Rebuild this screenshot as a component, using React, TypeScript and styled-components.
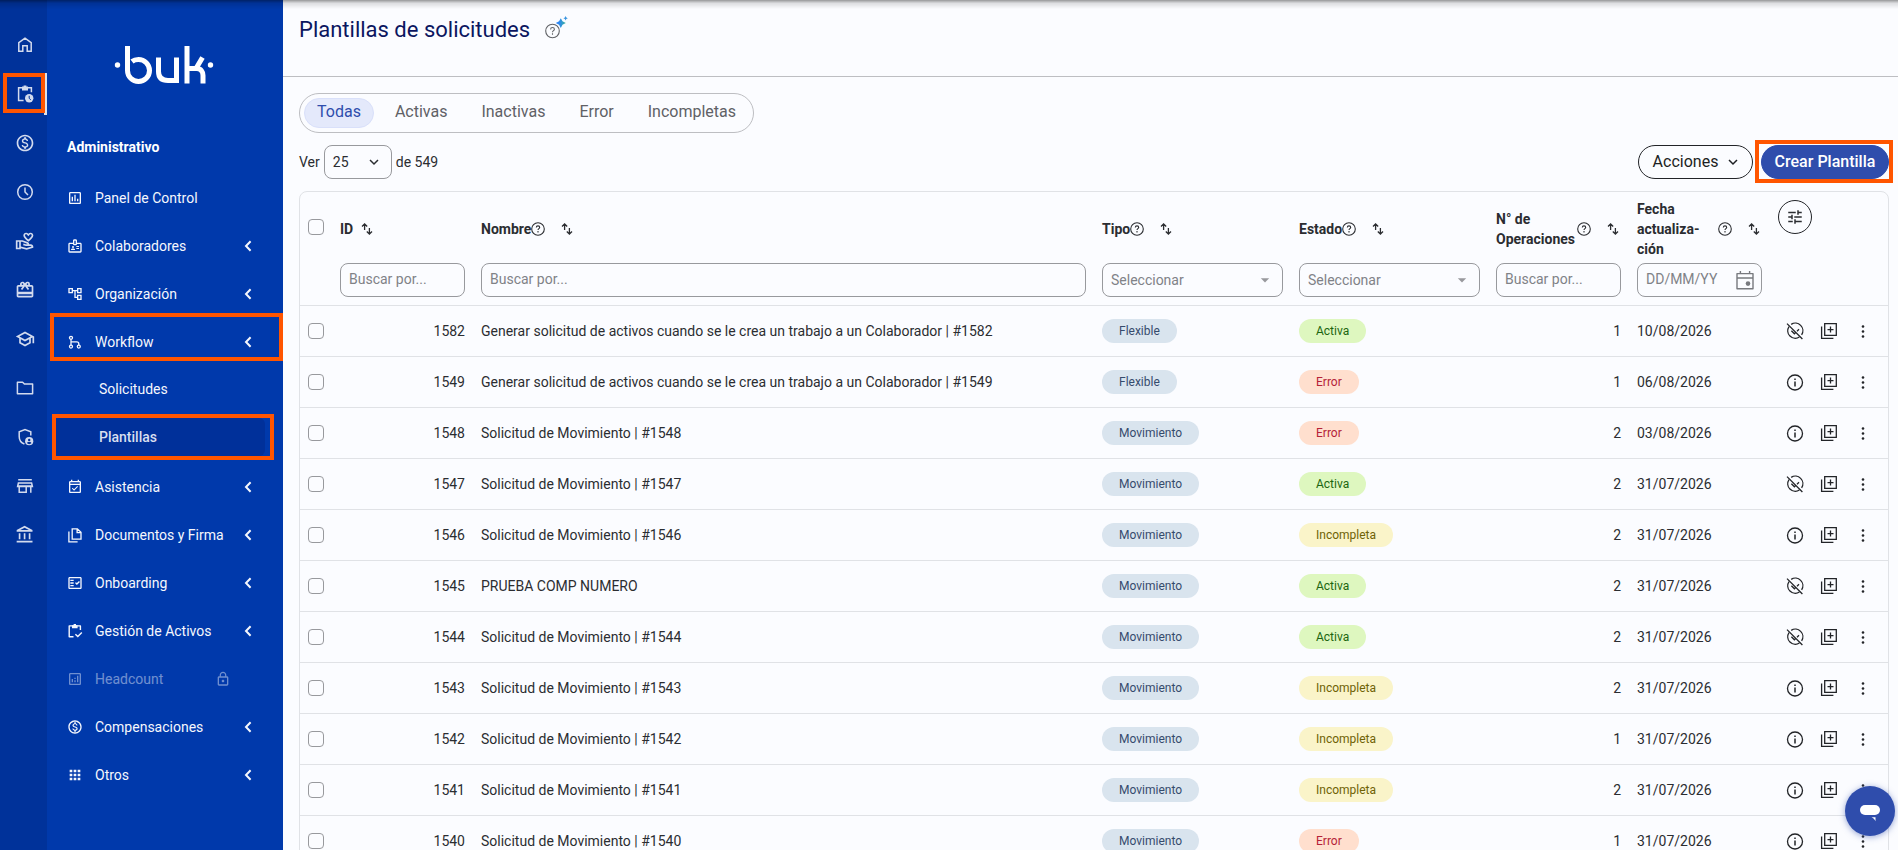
import React from "react";
import styled, { createGlobalStyle, css } from "styled-components";
import {
  MdApps,
  MdArrowDropDown,
  MdOutlineAccountBalance,
  MdOutlineAccountTree,
  MdOutlineAnalytics,
  MdOutlineBadge,
  MdOutlineCardGiftcard,
  MdOutlineEventAvailable,
  MdOutlineFactCheck,
  MdOutlineInsertChart,
  MdOutlineMonetizationOn,
  MdOutlineSchool,
  MdOutlineVolunteerActivism,
  MdLockOutline,
  MdTune,
} from "react-icons/md";

const color = {
  rail: "#00329a",
  sidebar: "#0039ab",
  sidebarActive: "#00309a",
  page: "#fbfcff",
  ink: "#2b2d31",
  muted: "#5f6166",
  title: "#0b1660",
  primary: "#2f4dac",
  highlight: "#ff5500",
  line: "#e0e2e6",
  control: "#98999d",
};

const GlobalStyle = createGlobalStyle`
  *, *::before, *::after { box-sizing: border-box; }
  body {
    margin: 0;
    background: ${color.page};
    color: ${color.ink};
    font: 14px/20px Roboto, "Liberation Sans", sans-serif;
  }
  button, input, select { font: inherit; color: inherit; margin: 0; }
  button { background: none; border: 0; padding: 0; cursor: pointer; }
  ul { list-style: none; margin: 0; padding: 0; }
  svg { display: block; flex: none; }
`;

/* ---------- icons ---------- */

const StrokeSvg = styled.svg<{ $size: number; $weight?: number }>`
  width: ${(p) => p.$size}px;
  height: ${(p) => p.$size}px;
  fill: none;
  stroke: currentColor;
  stroke-width: ${(p) => p.$weight ?? 1.5};
`;

type IconProps = { size?: number };

const HomeIcon = () => (
  <StrokeSvg $size={20} viewBox="0 0 20 20">
    <path d="M3.8 16.2V7.7L10 3.1l6.2 4.6v8.5h-4v-5.4H7.8v5.4z" />
  </StrokeSvg>
);
const PendingIcon = () => (
  <StrokeSvg $size={20} viewBox="0 0 20 20">
    <path d="M8.6 16.6H3.6V3.8h12.8v4.4" />
    <path d="M7 2.6h6v4H7zM8.6 1.5h2.8v2H8.6z" fill="currentColor" stroke="none" />
    <circle cx="14.2" cy="14.2" r="4.2" fill="currentColor" stroke="none" />
    <path d="M14.2 11.8v2.6l1.6 1.4" stroke={color.sidebarActive} strokeWidth="1" />
  </StrokeSvg>
);
const ClockIcon = () => (
  <StrokeSvg $size={20} viewBox="0 0 20 20">
    <circle cx="10" cy="10" r="7.3" />
    <path d="M10 5.6V10l3 3" />
  </StrokeSvg>
);
const FolderIcon = () => (
  <StrokeSvg $size={20} viewBox="0 0 20 20">
    <path d="M2.4 4.2h5.2l1.8 1.9h8.2v9.7H2.4z" strokeLinejoin="round" />
  </StrokeSvg>
);
const ShieldIcon = () => (
  <StrokeSvg $size={20} viewBox="0 0 20 20">
    <path d="M15.8 8.6V4.7L10 2.6 4.2 4.7v4.7c0 3.6 2.2 6.5 5.2 7.6" />
    <circle cx="14.2" cy="14.2" r="4.1" fill="currentColor" stroke="none" />
    <path d="M14.2 11.7a1.2 1.2 0 1 0 0 2.4 1.2 1.2 0 0 0 0-2.4zM11.9 16c.6-.8 1.4-1.2 2.3-1.2s1.7.4 2.3 1.2a2.9 2.9 0 0 1-4.6 0z" fill={color.rail} stroke="none" />
  </StrokeSvg>
);
const StoreIcon = () => (
  <StrokeSvg $size={20} viewBox="0 0 20 20">
    <path d="M3.2 3.8h13.6M3.2 10h13.6M3.4 7h13.2l.8 3.6H2.6zM4.2 10v6.2h7V10M15.8 10v6.8" />
  </StrokeSvg>
);
const BranchIcon = () => (
  <StrokeSvg $size={16} $weight={1.3} viewBox="0 0 16 16">
    <circle cx="4" cy="3.8" r="1.5" />
    <circle cx="4" cy="12.6" r="1.5" />
    <circle cx="11.8" cy="12.6" r="1.5" />
    <path d="M4 5.4v5.6M4 7.8h5.8a2 2 0 0 1 2 2v1.2" />
  </StrokeSvg>
);
const FilesIcon = () => (
  <StrokeSvg $size={16} $weight={1.3} viewBox="0 0 16 16">
    <path d="M5.2 1.9h5.2l3.6 3.4v6.9H5.2zM10.1 2v3.6h3.7" />
    <path d="M1.9 4.4v10.4h8.7" />
  </StrokeSvg>
);
const AssignmentIcon = () => (
  <StrokeSvg $size={16} $weight={1.4} viewBox="0 0 16 16">
    <path d="M6.5 13.7H2.2V2.9h11.2V7" strokeLinejoin="round" />
    <path d="M5 2.2h5.6v3H5zM6.6 1h2.4v2H6.6z" fill="currentColor" stroke="none" />
    <path d="M8.4 11.2l2.4 2.4 4-4.2" />
  </StrokeSvg>
);
const ChevronLeft = () => (
  <StrokeSvg $size={12} $weight={2} viewBox="0 0 12 12">
    <path d="M8.6 1.2L4 6l4.600 4.8" />
  </StrokeSvg>
);
const ChevronDown = ({ size = 10 }: IconProps) => (
  <StrokeSvg $size={size} viewBox="0 0 10 10">
    <path d="M1 3l4 4 4-4" />
  </StrokeSvg>
);
const HelpIcon = ({ size = 14 }: IconProps) => (
  <StrokeSvg $size={size} $weight={1.1} viewBox="0 0 14 14">
    <circle cx="7" cy="7" r="6.3" />
    <path d="M5.300 5.6c0-1 .7-1.7 1.7-1.7s1.7.6 1.7 1.5c0 1.2-1.7 1.3-1.7 2.7M7 9.1v1.3" />
  </StrokeSvg>
);
const SortIcon = () => (
  <StrokeSvg $size={12} $weight={1.3} viewBox="0 0 12 12">
    <path d="M3.6 7V1M1 3.5L3.6 1l2.6 2.5M8.4 5v6M5.8 8.5L8.400 11 11 8.5" />
  </StrokeSvg>
);
const CalendarIcon = () => (
  <StrokeSvg $size={20} $weight={1.4} viewBox="0 0 20 20">
    <path d="M2 3.6h16v15.2H2zM2 8h16M5.400 1v2.6M14.6 1v2.6" strokeLinejoin="round" />
    <circle cx="13" cy="13.6" r="2.3" fill="currentColor" stroke="none" />
  </StrokeSvg>
);
const DeactivateIcon = () => (
  <StrokeSvg $size={20} $weight={1.3} viewBox="0 0 20 20">
    <path d="M6.2 3.4A7.5 7.5 0 0 1 16.6 13.8M14.4 16A7.5 7.5 0 0 1 4 5.6" />
    <path d="M2 2.6L17.4 18M6.4 9.8l3 3 1.2-1.2M12 10.2l2-2" />
  </StrokeSvg>
);
const InfoIcon = () => (
  <StrokeSvg $size={20} $weight={1.3} viewBox="0 0 20 20">
    <circle cx="10" cy="10.5" r="7.5" />
    <path d="M10 9.4v5M10 6.6v1.5" strokeWidth="1.5" />
  </StrokeSvg>
);
const DuplicateIcon = () => (
  <StrokeSvg $size={20} $weight={1.3} viewBox="0 0 20 20">
    <path d="M5.700 2.7h11.6v11.6H5.7zM11.5 5.6v6M8.5 8.6h6" />
    <path d="M2.6 5.6v11.8h11.8" />
  </StrokeSvg>
);
const MoreIcon = () => (
  <StrokeSvg $size={20} viewBox="0 0 20 20">
    <g fill="currentColor" stroke="none">
      <circle cx="10" cy="5.5" r="1.300" />
      <circle cx="10" cy="10.5" r="1.300" />
      <circle cx="10" cy="15.5" r="1.300" />
    </g>
  </StrokeSvg>
);

/* ---------- shell ---------- */

const Shell = styled.div`
  display: grid;
  grid-template-columns: 47px 236px minmax(0, 1fr);
  height: 100vh;
  overflow: hidden;
`;

const TopShade = styled.div`
  position: fixed;
  inset: 0 0 auto;
  height: 9px;
  pointer-events: none;
  background: linear-gradient(rgba(0, 0, 0, 0.4), rgba(0, 0, 0, 0.12) 35%, transparent);
`;

const outlined = css`
  content: "";
  position: absolute;
  border: 4px solid ${color.highlight};
  pointer-events: none;
`;

const Rail = styled.nav`
  background: ${color.rail};
  color: #d3dbee;
  padding-top: 24px;
`;

const RailList = styled.ul`
  display: grid;
  gap: 7px;
`;

const RailLink = styled.a<{ $active?: boolean }>`
  position: relative;
  display: flex;
  align-items: center;
  height: 42px;
  padding-left: 15px;
  color: inherit;
  ${(p) =>
    p.$active &&
    css`
      background: ${color.sidebarActive};
      border-right: 3px solid #dfe1e6;
      &::after {
        ${outlined}
        inset: 0 -1px 2px 3px;
      }
    `}
`;

const Sidebar = styled.aside`
  background: ${color.sidebar};
  color: #f5f7fd;
`;

const Logo = styled.svg`
  width: 100px;
  height: 40px;
  margin: 45px 0 0 67px;
  fill: none;
  stroke: #fff;
  stroke-width: 5;
`;

const SideHeading = styled.h2`
  margin: 52px 0 17px 20px;
  font-size: 14px;
  line-height: 20px;
  font-weight: 700;
  color: #fff;
`;

const MenuLink = styled.a<{ $disabled?: boolean; $marked?: boolean }>`
  position: relative;
  display: flex;
  align-items: center;
  gap: 12px;
  height: 48px;
  padding: 0 29px 0 20px;
  color: inherit;
  text-decoration: none;
  opacity: ${(p) => (p.$disabled ? 0.45 : 1)};
  & > span { flex: 1; }
  & > svg:first-child { width: 16px; height: 16px; }
  ${(p) =>
    p.$marked &&
    css`
      &::after {
        ${outlined}
        inset: -5px 0 5px 3px;
      }
    `}
`;

const LockSlot = styled.i`
  padding-right: 23px;
`;

const SubMenu = styled.ul`
  display: grid;
  gap: 10px;
  padding: 4px 18px 7px 5px;
`;

const SubLink = styled.a<{ $active?: boolean }>`
  position: relative;
  display: flex;
  align-items: center;
  height: 38px;
  padding-left: 47px;
  border-radius: 6px;
  color: inherit;
  text-decoration: none;
  ${(p) =>
    p.$active &&
    css`
      background: ${color.sidebarActive};
      color: #d8dfef;
      font-weight: 500;
      &::after {
        ${outlined}
        inset: -4px -9px -4px 0;
      }
    `}
`;

/* ---------- page ---------- */

const Main = styled.main`
  min-width: 0;
`;

const PageHeader = styled.header`
  display: flex;
  gap: 14px;
  height: 77px;
  padding: 14px 16px;
  border-bottom: 1px solid #bdbec2;
`;

const PageTitle = styled.h1`
  margin: 0;
  font-size: 22px;
  line-height: 32px;
  font-weight: 400;
  color: ${color.title};
`;

const AssistButton = styled.button`
  height: 28px;
  color: #606266;
`;

const Content = styled.div`
  padding: 16px 9px 0 16px;
`;

const Tabs = styled.div`
  display: inline-flex;
  gap: 8px;
  padding: 4px;
  border: 1px solid #bdbec2;
  border-radius: 20px;
`;

const Tab = styled.button<{ $active?: boolean }>`
  height: 30px;
  padding: 0 12px 2px;
  border: 1px solid ${(p) => (p.$active ? "#d9e0fa" : "transparent")};
  border-radius: 15px;
  background: ${(p) => (p.$active ? "#e4e9fb" : "transparent")};
  color: ${(p) => (p.$active ? color.primary : color.muted)};
  font-size: 16px;
  line-height: 24px;
`;

const Toolbar = styled.div`
  display: flex;
  align-items: center;
  gap: 8px;
  height: 34px;
  margin: 12px 0;
`;

const PageSize = styled.label`
  display: flex;
  align-items: center;
  gap: 4px;
  margin-right: auto;
`;

const SelectWrap = styled.span<{ $muted?: boolean }>`
  position: relative;
  display: flex;
  align-items: center;
  color: ${(p) => (p.$muted ? "#808287" : color.ink)};
  & > svg {
    position: absolute;
    right: ${(p) => (p.$muted ? 8 : 13)}px;
    pointer-events: none;
    color: ${(p) => (p.$muted ? color.control : color.ink)};
  }
`;

const controlBox = css`
  height: 34px;
  border: 1px solid ${color.control};
  border-radius: 8px;
  background: transparent;
  font-weight: 400;
  outline: none;
`;

const Select = styled.select<{ $compact?: boolean }>`
  ${controlBox}
  width: ${(p) => (p.$compact ? "68px" : "100%")};
  padding: 0 8px;
  appearance: none;
`;

const TextInput = styled.input`
  ${controlBox}
  display: block;
  width: 100%;
  padding: 0 8px 2px;
  &::placeholder { color: #808287; opacity: 1; }
`;

const DateField = styled.span`
  position: relative;
  display: flex;
  align-items: center;
  & > button {
    position: absolute;
    right: 7px;
    color: #77797e;
  }
`;

const PillButton = styled.button<{ $primary?: boolean }>`
  position: relative;
  display: flex;
  align-items: center;
  justify-content: center;
  gap: 10px;
  height: 34px;
  min-width: ${(p) => (p.$primary ? 128 : 115)}px;
  border: 1px solid ${(p) => (p.$primary ? color.primary : "#222428")};
  border-radius: 17px;
  background: ${(p) => (p.$primary ? color.primary : "transparent")};
  color: ${(p) => (p.$primary ? "#fff" : "#1d1f23")};
  font-size: 16px;
  font-weight: ${(p) => (p.$primary ? 500 : 400)};
  ${(p) =>
    p.$primary &&
    css`
      &::after {
        ${outlined}
        inset: -6px -5px -5px -7px;
      }
    `}
`;

/* ---------- table ---------- */

const TableFrame = styled.div`
  border: 1px solid ${color.line};
  border-radius: 8px 8px 0 0;
  overflow: hidden;
`;

const Table = styled.table`
  width: 100%;
  table-layout: fixed;
  border-collapse: separate;
  border-spacing: 0;
`;

const Col = styled.col<{ $width?: number }>`
  width: ${(p) => (p.$width ? `${p.$width}px` : "auto")};
`;

const HeadCell = styled.th`
  height: 114px;
  padding: 8px;
  border-bottom: 1px solid ${color.line};
  vertical-align: top;
  text-align: left;
  font-weight: 700;
`;

const HeadLabel = styled.div<{ $spread?: boolean }>`
  display: flex;
  align-items: center;
  height: 58px;
  margin-bottom: 5px;
  padding-right: ${(p) => (p.$spread ? 2 : 0)}px;
  & > span {
    flex: ${(p) => (p.$spread ? "1 1 0" : "none")};
    min-width: 0;
  }
`;

const SortButton = styled.button<{ $gap?: number }>`
  margin-left: ${(p) => p.$gap ?? 16}px;
`;

const Cell = styled.td<{ $align?: "right" }>`
  height: 51px;
  padding: 0 8px;
  border-bottom: 1px solid ${color.line};
  text-align: ${(p) => p.$align ?? "left"};
  vertical-align: middle;
`;

const Check = styled.input<{ $head?: boolean }>`
  appearance: none;
  display: block;
  width: 16px;
  height: 16px;
  margin: ${(p) => (p.$head ? "19px 0 0" : "0")};
  border: 1px solid ${color.control};
  border-radius: 4px;
`;

type Tone = "blue" | "green" | "red" | "yellow";
const tones: Record<Tone, [string, string]> = {
  blue: ["#d9e4ee", "#364b6d"],
  green: ["#def7bf", "#1c6610"],
  red: ["#ffdfce", "#b52238"],
  yellow: ["#faf4c9", "#6f6206"],
};

const Badge = styled.span<{ $tone: Tone }>`
  display: inline-block;
  height: 24px;
  padding: 0 17px;
  border-radius: 12px;
  background: ${(p) => tones[p.$tone][0]};
  color: ${(p) => tones[p.$tone][1]};
  font-size: 12px;
  line-height: 24px;
  vertical-align: middle;
`;

const RoundButton = styled.button`
  display: grid;
  place-items: center;
  width: 34px;
  height: 34px;
  border: 1px solid #222428;
  border-radius: 50%;
`;

const RowActions = styled.div`
  display: flex;
  align-items: center;
  gap: 14px;
  padding-left: 7px;
  color: #222428;
`;

const ChatButton = styled.button`
  position: fixed;
  right: 3px;
  bottom: 14px;
  display: grid;
  place-items: center;
  width: 50px;
  height: 50px;
  border-radius: 50%;
  background: ${color.primary};
  box-shadow: 0 1px 6px rgba(47, 77, 172, 0.5);
`;

/* ---------- data ---------- */

const railItems: [string, React.ReactNode][] = [
  ["Inicio", <HomeIcon />],
  ["Administrativo", <PendingIcon />],
  ["Remuneraciones", <MdOutlineMonetizationOn size={20} />],
  ["Tiempo", <ClockIcon />],
  ["Beneficios", <MdOutlineVolunteerActivism size={20} />],
  ["Regalos", <MdOutlineCardGiftcard size={20} />],
  ["Capacitaciones", <MdOutlineSchool size={20} />],
  ["Carpetas", <FolderIcon />],
  ["Seguridad", <ShieldIcon />],
  ["Marketplace", <StoreIcon />],
  ["Finanzas", <MdOutlineAccountBalance size={20} />],
];

type MenuItem = { label: string; icon: React.ReactNode; leaf?: boolean; locked?: boolean; marked?: boolean };

const menuTop: MenuItem[] = [
  { label: "Panel de Control", icon: <MdOutlineInsertChart />, leaf: true },
  { label: "Colaboradores", icon: <MdOutlineBadge /> },
  { label: "Organización", icon: <MdOutlineAccountTree /> },
  { label: "Workflow", icon: <BranchIcon />, marked: true },
];

const menuBottom: MenuItem[] = [
  { label: "Asistencia", icon: <MdOutlineEventAvailable /> },
  { label: "Documentos y Firma", icon: <FilesIcon /> },
  { label: "Onboarding", icon: <MdOutlineFactCheck /> },
  { label: "Gestión de Activos", icon: <AssignmentIcon /> },
  { label: "Headcount", icon: <MdOutlineAnalytics />, locked: true },
  { label: "Compensaciones", icon: <MdOutlineMonetizationOn /> },
  { label: "Otros", icon: <MdApps /> },
];

const statusTone: Record<string, Tone> = { Activa: "green", Error: "red", Incompleta: "yellow" };

type Row = [id: number, name: string, type: string, status: string, ops: number, date: string];
const longName = "Generar solicitud de activos cuando se le crea un trabajo a un Colaborador";
const rows: Row[] = [
  [1582, `${longName} | #1582`, "Flexible", "Activa", 1, "10/08/2026"],
  [1549, `${longName} | #1549`, "Flexible", "Error", 1, "06/08/2026"],
  [1548, "Solicitud de Movimiento | #1548", "Movimiento", "Error", 2, "03/08/2026"],
  [1547, "Solicitud de Movimiento | #1547", "Movimiento", "Activa", 2, "31/07/2026"],
  [1546, "Solicitud de Movimiento | #1546", "Movimiento", "Incompleta", 2, "31/07/2026"],
  [1545, "PRUEBA COMP NUMERO", "Movimiento", "Activa", 2, "31/07/2026"],
  [1544, "Solicitud de Movimiento | #1544", "Movimiento", "Activa", 2, "31/07/2026"],
  [1543, "Solicitud de Movimiento | #1543", "Movimiento", "Incompleta", 2, "31/07/2026"],
  [1542, "Solicitud de Movimiento | #1542", "Movimiento", "Incompleta", 1, "31/07/2026"],
  [1541, "Solicitud de Movimiento | #1541", "Movimiento", "Incompleta", 2, "31/07/2026"],
  [1540, "Solicitud de Movimiento | #1540", "Movimiento", "Error", 1, "31/07/2026"],
];

/* ---------- parts ---------- */

const MenuList = ({ items }: { items: MenuItem[] }) => (
  <>
    {items.map((item) => (
      <li key={item.label}>
        <MenuLink href="#" $disabled={item.locked} $marked={item.marked}>
          {item.icon}
          <span>{item.label}</span>
          {item.locked && <LockSlot><MdLockOutline size={16} /></LockSlot>}
          {!item.leaf && !item.locked && <ChevronLeft />}
        </MenuLink>
      </li>
    ))}
  </>
);

type HeadProps = {
  label: React.ReactNode;
  name: string;
  help?: boolean;
  spread?: boolean;
  sortGap?: number;
  children: React.ReactNode;
};

const ColumnHead = ({ label, name, help, spread, sortGap, children }: HeadProps) => (
  <HeadCell scope="col">
    <HeadLabel $spread={spread}>
      <span>{label}</span>
      {help && <HelpIcon />}
      <SortButton $gap={sortGap} aria-label={`Ordenar por ${name}`}>
        <SortIcon />
      </SortButton>
    </HeadLabel>
    {children}
  </HeadCell>
);

const FilterSelect = ({ name }: { name: string }) => (
  <SelectWrap $muted>
    <Select aria-label={`Filtrar ${name}`}>
      <option>Seleccionar</option>
    </Select>
    <MdArrowDropDown size={20} />
  </SelectWrap>
);

export default function App() {
  return (
    <>
      <GlobalStyle />
      <Shell>
        <Rail aria-label="Módulos">
          <RailList>
            {railItems.map(([label, icon], i) => (
              <li key={label}>
                <RailLink href="#" aria-label={label} $active={i === 1}>
                  {icon}
                </RailLink>
              </li>
            ))}
          </RailList>
        </Rail>

        <Sidebar>
          <Logo viewBox="0 0 100 40" role="img" aria-label="buk">
            <circle cx="3.5" cy="20" r="2.7" fill="#fff" stroke="none" />
            <circle cx="96.5" cy="20" r="2.7" fill="#fff" stroke="none" />
            <path d="M13.5 1v24.5a11 11 0 1 0 11-11c-3 0-5 .8-6.5 2" />
            <path d="M44.5 12.5v14c0 6 3.5 9 9.5 9h8.500v-23" />
            <path d="M73 1v37.5M73 23.5h9.5c4.500 0 6.5 3 6.5 7v8M82 23.5l6.5-11" />
          </Logo>
          <SideHeading>Administrativo</SideHeading>
          <nav aria-label="Administrativo">
            <ul>
              <MenuList items={menuTop} />
              <li>
                <SubMenu>
                  <li><SubLink href="#">Solicitudes</SubLink></li>
                  <li><SubLink href="#" $active aria-current="page">Plantillas</SubLink></li>
                </SubMenu>
              </li>
              <MenuList items={menuBottom} />
            </ul>
          </nav>
        </Sidebar>

        <Main>
          <PageHeader>
            <PageTitle>Plantillas de solicitudes</PageTitle>
            <AssistButton aria-label="Ayuda">
              <StrokeSvg $size={24} $weight={1.1} viewBox="0 0 24 24">
                <defs>
                  <linearGradient id="spark" x1="0" x2="1">
                    <stop offset="0.3" stopColor="#2a84f5" />
                    <stop offset="1" stopColor="#3db39b" />
                  </linearGradient>
                </defs>
                <circle cx="8.5" cy="15" r="6.8" />
                <path d="M6.6 13.4c0-1.1.8-1.9 1.9-1.9s1.9.7 1.9 1.7c0 1.4-1.9 1.500-1.9 3M8.5 17.300v1.4" />
                <path d="M16.8 2.2l1.7 3.1 3.3 1.7-3.3 1.7-1.700 3.3-1.7-3.300L11.8 7l3.300-1.7z" fill="url(#spark)" stroke="none" />
                <path d="M21.6 0l.7 1.5 1.5.7-1.5.7-.7 1.5-.7-1.5-1.5-.7 1.5-.7z" fill="#3a95e0" stroke="none" />
              </StrokeSvg>
            </AssistButton>
          </PageHeader>

          <Content>
            <Tabs role="tablist" aria-label="Estado de plantillas">
              {["Todas", "Activas", "Inactivas", "Error", "Incompletas"].map((t, i) => (
                <Tab key={t} role="tab" aria-selected={i === 0} $active={i === 0}>{t}</Tab>
              ))}
            </Tabs>

            <Toolbar>
              <PageSize>
                Ver
                <SelectWrap>
                  <Select $compact defaultValue="25">
                    <option>25</option>
                    <option>50</option>
                    <option>100</option>
                  </Select>
                  <ChevronDown />
                </SelectWrap>
                de 549
              </PageSize>
              <PillButton>
                Acciones
                <ChevronDown />
              </PillButton>
              <PillButton $primary>Crear Plantilla</PillButton>
            </Toolbar>

            <TableFrame>
              <Table>
                <colgroup>
                  <Col $width={32} />
                  <Col $width={141} />
                  <Col />
                  <Col $width={197} />
                  <Col $width={197} />
                  <Col $width={141} />
                  <Col $width={141} />
                  <Col $width={118} />
                </colgroup>
                <thead>
                  <tr>
                    <HeadCell scope="col">
                      <Check type="checkbox" $head aria-label="Seleccionar todas" />
                    </HeadCell>
                    <ColumnHead label="ID" name="ID" sortGap={8}>
                      <TextInput placeholder="Buscar por..." aria-label="Buscar por ID" />
                    </ColumnHead>
                    <ColumnHead label="Nombre" name="Nombre" help>
                      <TextInput placeholder="Buscar por..." aria-label="Buscar por nombre" />
                    </ColumnHead>
                    <ColumnHead label="Tipo" name="Tipo" help>
                      <FilterSelect name="Tipo" />
                    </ColumnHead>
                    <ColumnHead label="Estado" name="Estado" help>
                      <FilterSelect name="Estado" />
                    </ColumnHead>
                    <ColumnHead label="N° de Operaciones" name="N° de Operaciones" help spread>
                      <TextInput placeholder="Buscar por..." aria-label="Buscar por operaciones" />
                    </ColumnHead>
                    <ColumnHead label={"Fecha actualiza\u00ADción"} name="Fecha actualización" help spread>
                      <DateField>
                        <TextInput placeholder="DD/MM/YY" aria-label="Fecha actualización" />
                        <button aria-label="Abrir calendario"><CalendarIcon /></button>
                      </DateField>
                    </ColumnHead>
                    <HeadCell scope="col">
                      <RoundButton aria-label="Configurar columnas"><MdTune size={18} /></RoundButton>
                    </HeadCell>
                  </tr>
                </thead>
                <tbody>
                  {rows.map(([id, name, type, status, ops, date]) => (
                    <tr key={id}>
                      <Cell><Check type="checkbox" aria-label={`Seleccionar ${id}`} /></Cell>
                      <Cell $align="right">{id}</Cell>
                      <Cell>{name}</Cell>
                      <Cell><Badge $tone="blue">{type}</Badge></Cell>
                      <Cell><Badge $tone={statusTone[status]}>{status}</Badge></Cell>
                      <Cell $align="right">{ops}</Cell>
                      <Cell>{date}</Cell>
                      <Cell>
                        <RowActions>
                          {status === "Activa" ? (
                            <button aria-label="Desactivar"><DeactivateIcon /></button>
                          ) : (
                            <button aria-label="Información"><InfoIcon /></button>
                          )}
                          <button aria-label="Duplicar"><DuplicateIcon /></button>
                          <button aria-label="Más opciones"><MoreIcon /></button>
                        </RowActions>
                      </Cell>
                    </tr>
                  ))}
                </tbody>
              </Table>
            </TableFrame>
          </Content>
        </Main>
      </Shell>

      <ChatButton aria-label="Abrir chat">
        <StrokeSvg $size={24} viewBox="0 0 24 24">
          <rect x="2" y="6" width="20" height="10" rx="5" fill="#fff" stroke="none" />
          <path d="M13.5 18.200h4v4c-.8-1.9-1.8-3-4-4z" fill="#fff" stroke="none" />
        </StrokeSvg>
      </ChatButton>
      <TopShade />
    </>
  );
}
